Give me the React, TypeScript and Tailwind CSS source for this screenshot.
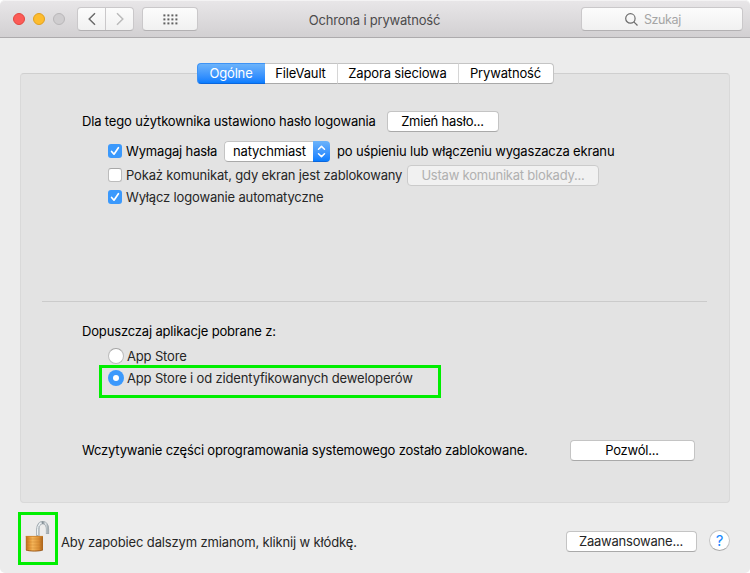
import type { ReactNode } from "react";

function Button({ className = "", children }: { className?: string; children: ReactNode }) {
  return (
    <button
      className={`flex h-[21px] shrink-0 items-center justify-center self-start rounded-[4px] border border-[#c4c4c4] border-b-[#a9a9a9] bg-white pr-px pb-px tracking-[-0.21px] whitespace-nowrap ${className}`}
    >
      {children}
    </button>
  );
}

function Checkbox({ checked }: { checked?: boolean }) {
  return (
    <span
      className={`flex size-[14px] shrink-0 items-center justify-center rounded-[3px] ${
        checked ? "bg-[#3b99fc]" : "border border-[#bcbcbc] border-t-[#a8a8a8] bg-white"
      }`}
    >
      {checked && (
        <svg viewBox="0 0 14 14" className="size-[14px]" fill="none" stroke="#fff" strokeWidth="1.7" strokeLinecap="round" strokeLinejoin="round">
          <path d="M3.6 7.5 6 10.2 10.4 3.7" />
        </svg>
      )}
    </span>
  );
}

function Radio({ checked }: { checked?: boolean }) {
  return (
    <span
      className={`flex size-4 shrink-0 items-center justify-center rounded-full ${
        checked ? "bg-[#3b99fc]" : "border border-[#bcbcbc] border-t-[#a4a4a4] bg-white"
      }`}
    >
      {checked && <span className="size-[6px] rounded-full bg-white" />}
    </span>
  );
}

function Padlock() {
  return (
    <svg width="26" height="34" viewBox="0 0 26 34">
      <defs>
        <linearGradient id="brass" x1="0" x2="1" y1="0" y2="0">
          <stop offset="0" stopColor="#b96c1c" />
          <stop offset="0.2" stopColor="#e29234" />
          <stop offset="0.4" stopColor="#f5b65a" />
          <stop offset="0.75" stopColor="#dc8f34" />
          <stop offset="1" stopColor="#a9631b" />
        </linearGradient>
        <linearGradient id="steel" x1="0" x2="1" y1="0" y2="0">
          <stop offset="0" stopColor="#a3adb3" />
          <stop offset="0.2" stopColor="#e6ecef" />
          <stop offset="0.5" stopColor="#7f8a91" />
          <stop offset="0.8" stopColor="#dfe4e7" />
          <stop offset="1" stopColor="#aab3b8" />
        </linearGradient>
      </defs>
      <path d="M12.9 17V10C12.9 1.4 22.5 1.4 22.5 10V15" fill="none" stroke="#98a2a8" strokeWidth="3.2" />
      <path d="M12.9 17V10C12.9 1.4 22.5 1.4 22.5 10V14.6" fill="none" stroke="url(#steel)" strokeWidth="2.2" />
      <path d="M12.5 16V9.7C12.7 6 14.7 4.4 16.7 4.1" fill="none" stroke="#f4f7f8" strokeWidth="0.9" />
      <path d="M.8 17H18V31C15.5 32.6 3 32.6.8 31Z" fill="url(#brass)" />
      <path d="M.8 17.4H18" stroke="#c98230" strokeWidth="0.8" />
      <path d="M1 20H17.8M1 23H17.8M1 26H17.8M1 29H17.8" stroke="#b87024" strokeWidth="0.7" opacity=".4" />
      <path d="M1 31C4 32.4 15 32.4 17.8 31" fill="none" stroke="#94551a" strokeWidth="0.9" />
    </svg>
  );
}

function TitleBar() {
  return (
    <header className="grid h-[38px] shrink-0 grid-cols-[1fr_auto_1fr] items-start rounded-t-[5px] border-t border-b border-t-[#f4f3f4] border-b-[#adabad] bg-linear-to-b from-[#e8e6e8] to-[#d2d0d2] pt-[6px] pr-[7px] pl-[13px]">
      <div className="flex h-6 items-center">
        <span className="size-3 rounded-full border border-[#e2463f] bg-[#fc5b57]" />
        <span className="ml-2 size-3 rounded-full border border-[#e0a01f] bg-[#fdbc2e]" />
        <span className="ml-2 size-3 rounded-full border border-[#b9b7b9] bg-[#cfcdcf]" />
        <div className="ml-3 flex h-6 w-[57px] rounded-[4px] border border-[#cac8ca] border-b-[#b3b1b3] bg-linear-to-b from-[#fcfcfc] to-[#f1f1f1]">
          <span className="flex flex-1 items-center justify-center border-r border-[#cac8ca]">
            <svg width="8" height="14" viewBox="0 0 8 14" fill="none" stroke="#6b6b6b" strokeWidth="1.5">
              <path d="M7 1.3 1.2 7 7 12.7" />
            </svg>
          </span>
          <span className="flex flex-1 items-center justify-center">
            <svg width="8" height="14" viewBox="0 0 8 14" fill="none" stroke="#bbb" strokeWidth="1.5">
              <path d="M1 1.3 6.8 7 1 12.7" />
            </svg>
          </span>
        </div>
        <div className="ml-2 flex h-6 w-14 items-center justify-center rounded-[4px] border border-[#cac8ca] border-b-[#b3b1b3] bg-linear-to-b from-[#fcfcfc] to-[#f1f1f1]">
          <svg width="15" height="11" viewBox="0 0 15 11" fill="#606060">
            {[0, 4, 8].map((y) => [0, 4, 8, 12].map((x) => <rect key={`${x}-${y}`} x={x + 0.4} y={y + 0.4} width="2" height="2" />))}
          </svg>
        </div>
      </div>
      <h1 className="mr-[7px] flex h-[26px] items-center tracking-[-0.2px] text-[#4c4b4c]">Ochrona i prywatność</h1>
      <div className="flex h-6 w-[162px] items-center gap-[6px] justify-self-end rounded-[4px] border border-[#cac8ca] border-b-[#b3b1b3] bg-linear-to-b from-[#fcfcfc] to-[#f1f1f1] pl-[43px] text-[#a5a5a5]">
        <svg width="13" height="13" viewBox="0 0 13 13" fill="none" stroke="#6c6c6c" strokeWidth="1.2">
          <circle cx="5.4" cy="5.4" r="4.7" />
          <path d="m8.8 8.8 3.7 3.7" />
        </svg>
        <span className="pt-px text-[12.5px] leading-4 tracking-[-0.4px]">Szukaj</span>
      </div>
    </header>
  );
}

function Tabs() {
  return (
    <nav className="flex h-[21px] w-[357px] shrink-0">
      <span className="flex w-[68px] items-center justify-center rounded-l-[4px] border border-r-0 border-[#3d93f5] border-b-[#0b66dc] bg-linear-to-b from-[#6cb3fa] to-[#067dff] pb-px text-white">
        Ogólne
      </span>
      <span className="flex w-[73px] items-center justify-center border-y border-r border-y-[#c4c4c4] border-r-[#d6d6d6] border-b-[#a9a9a9] bg-white pb-px">
        FileVault
      </span>
      <span className="flex w-[121px] items-center justify-center border-y border-r border-y-[#c4c4c4] border-r-[#d6d6d6] border-b-[#a9a9a9] bg-white pb-px">
        Zapora sieciowa
      </span>
      <span className="flex w-[95px] items-center justify-center rounded-r-[4px] border border-l-0 border-[#c4c4c4] border-b-[#a9a9a9] bg-white pb-px">
        Prywatność
      </span>
    </nav>
  );
}

export default function App() {
  return (
    <div className="h-[573px] w-[750px] bg-white font-['Inter','Noto_Sans',sans-serif] text-[13px] leading-4 tracking-[-0.16px] text-black">
      <div className="flex h-full flex-col overflow-hidden rounded-[5px] bg-[#ececec] whitespace-nowrap">
        <TitleBar />
        <main className="mx-5 mt-[35px] flex h-[430px] shrink-0 flex-col rounded-[4px] border border-[#d9d9d9] border-t-[#cfcfcf] bg-[#e3e3e3]">
          <div className="-mt-[11px] flex justify-center">
            <Tabs />
          </div>
          <div className="mt-[27px] flex h-[21px] items-center pb-px pl-[61px]">
            <span className="w-[305px]">Dla tego użytkownika ustawiono hasło logowania</span>
            <Button className="w-[112px]">Zmień hasło...</Button>
          </div>
          <div className="mt-[9px] flex h-[21px] items-center pb-px pl-[87px]">
            <Checkbox checked />
            <span className="ml-[4px] w-[98px]">Wymagaj hasła</span>
            <div className="flex h-[21px] w-[106px] shrink-0 self-start overflow-hidden rounded-[4px]">
              <span className="flex flex-1 items-center rounded-l-[4px] border border-r-0 border-[#c4c4c4] border-b-[#a9a9a9] bg-white pb-px pl-2">
                natychmiast
              </span>
              <span className="flex w-[17px] items-center justify-center border-b border-[#0b66dc] bg-linear-to-b from-[#6cb3fa] to-[#067dff]">
                <svg width="9" height="13" viewBox="0 0 9 13" fill="none" stroke="#fff" strokeWidth="1.5" strokeLinecap="round" strokeLinejoin="round">
                  <path d="M1.5 4.3 4.5 1.4 7.5 4.3M1.5 8.7 4.5 11.6 7.5 8.7" />
                </svg>
              </span>
            </div>
            <span className="ml-[7px]">po uśpieniu lub włączeniu wygaszacza ekranu</span>
          </div>
          <div className="mt-[3px] flex h-[21px] items-center pb-px pl-[87px] text-[#262626]">
            <Checkbox />
            <span className="ml-[4px] w-[281px]">Pokaż komunikat, gdy ekran jest zablokowany</span>
            <button
              disabled
              className="flex h-[21px] w-48 shrink-0 items-center justify-center self-start rounded-[4px] border border-[#cbcbcb] bg-[#f1f1f1] pb-px tracking-[-0.21px] text-[#b0b0b0]"
            >
              Ustaw komunikat blokady...
            </button>
          </div>
          <div className="mt-px flex h-[21px] items-center pb-px pl-[87px] text-[#262626]">
            <Checkbox checked />
            <span className="ml-[4px]">Wyłącz logowanie automatyczne</span>
          </div>
          <hr className="mt-[93px] mr-[22px] ml-[21px] border-t border-[#cbcbcb]" />
          <p className="mt-[21px] pl-[61px]">Dopuszczaj aplikacje pobrane z:</p>
          <div className="mt-[9px] flex h-4 items-center pl-[87px] text-[#262626]">
            <Radio />
            <span className="ml-[3px]">App Store</span>
          </div>
          <div className="mt-px ml-[78px] flex h-[33px] w-[342px] items-start border-3 border-[#00ee00] pt-[2px] pl-[6px] text-[#262626]">
            <Radio checked />
            <span className="ml-[3px]">App Store i od zidentyfikowanych deweloperów</span>
          </div>
          <div className="mt-[42px] flex h-[21px] items-center pb-px pl-[61px]">
            <span className="w-[488px] tracking-[-0.18px]">Wczytywanie części oprogramowania systemowego zostało zablokowane.</span>
            <Button className="w-[125px]">Pozwól...</Button>
          </div>
        </main>
        <footer className="mt-[9px] flex pr-5 pl-[18px]">
          <div className="flex h-[53px] w-10 shrink-0 items-start border-3 border-[#00ee00] pt-[4px] pl-1">
            <Padlock />
          </div>
          <span className="mt-[22px] ml-[3px] w-[505px] tracking-[-0.14px] text-[#262626]">Aby zapobiec dalszym zmianom, kliknij w kłódkę.</span>
          <Button className="mt-[19px] w-[131px] text-[#262626]">Zaawansowane...</Button>
          <button className="mt-[18px] ml-3 flex size-[21px] shrink-0 items-center justify-center rounded-full border border-[#c4c4c4] border-b-[#a9a9a9] bg-white text-[15px] text-[#1587ff]">
            ?
          </button>
        </footer>
      </div>
    </div>
  );
}
